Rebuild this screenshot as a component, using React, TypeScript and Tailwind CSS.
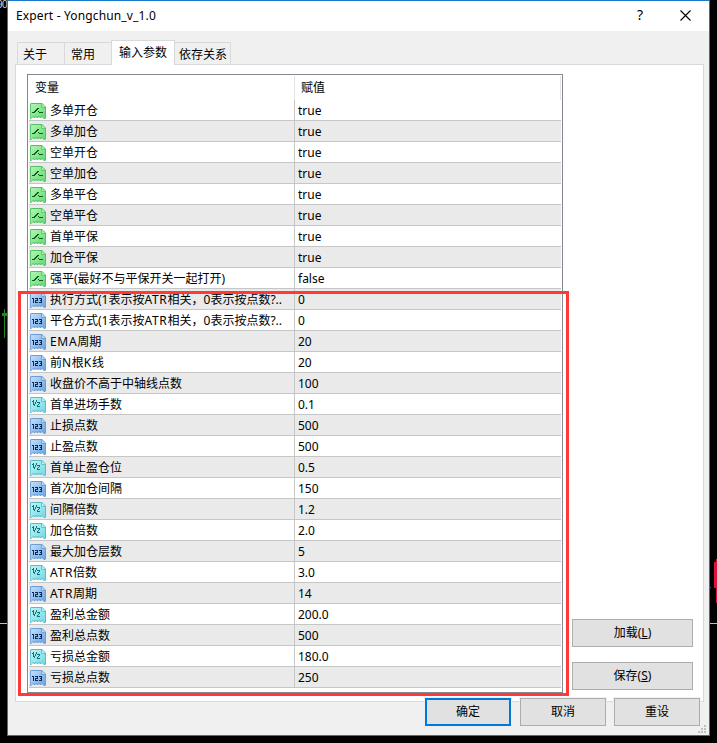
import React from "react";

type Kind = "bool" | "int" | "real";

const rows: [Kind, string, string][] = [
  ["bool", "多单开仓", "true"],
  ["bool", "多单加仓", "true"],
  ["bool", "空单开仓", "true"],
  ["bool", "空单加仓", "true"],
  ["bool", "多单平仓", "true"],
  ["bool", "空单平仓", "true"],
  ["bool", "首单平保", "true"],
  ["bool", "加仓平保", "true"],
  ["bool", "强平(最好不与平保开关一起打开)", "false"],
  ["int", "执行方式(1表示按ATR相关，0表示按点数?..", "0"],
  ["int", "平仓方式(1表示按ATR相关，0表示按点数?..", "0"],
  ["int", "EMA周期", "20"],
  ["int", "前N根K线", "20"],
  ["int", "收盘价不高于中轴线点数", "100"],
  ["real", "首单进场手数", "0.1"],
  ["int", "止损点数", "500"],
  ["int", "止盈点数", "500"],
  ["real", "首单止盈仓位", "0.5"],
  ["int", "首次加仓间隔", "150"],
  ["real", "间隔倍数", "1.2"],
  ["real", "加仓倍数", "2.0"],
  ["int", "最大加仓层数", "5"],
  ["real", "ATR倍数", "3.0"],
  ["int", "ATR周期", "14"],
  ["real", "盈利总金额", "200.0"],
  ["int", "盈利总点数", "500"],
  ["real", "亏损总金额", "180.0"],
  ["int", "亏损总点数", "250"],
];

const palette = {
  bool: { edge: "#52c063", light: "#a9f3ab", dark: "#6bdc7c", fold: "#4fbf60", ink: "#0a5c18" },
  int: { edge: "#6a9fd6", light: "#b9dafb", dark: "#73aae6", fold: "#5f95cc", ink: "#0c2a58" },
  real: { edge: "#5bbcc9", light: "#b5f3f5", dark: "#7bdbe6", fold: "#55b6c4", ink: "#14717e" },
};

// Pixel rectangles (x, y, width, height) for each icon's symbol
const symbols: Record<Kind, number[][]> = {
  bool: [[2, 9, 3, 1], [4, 8, 2, 1], [5, 7, 2, 1], [6, 6, 2, 1], [7, 5, 2, 1], [9, 9, 4, 1], [8, 8, 1, 1]],
  int: [
    [2, 6, 2, 1], [3, 7, 1, 4],
    [5, 6, 3, 1], [7, 7, 1, 1], [5, 8, 3, 1], [5, 9, 1, 1], [5, 10, 3, 1],
    [9, 6, 3, 1], [11, 7, 1, 1], [10, 8, 2, 1], [11, 9, 1, 1], [9, 10, 3, 1],
  ],
  real: [
    [2, 4, 1, 1], [3, 3, 1, 5],
    [6, 3, 1, 2], [5, 5, 1, 2], [4, 7, 1, 2],
    [7, 5, 3, 1], [9, 6, 1, 1], [8, 7, 1, 1], [7, 8, 1, 1], [7, 9, 3, 1],
  ],
};

function TypeIcon({ kind }: { kind: Kind }) {
  const p = palette[kind];
  return (
    <svg width="16" height="16" viewBox="0 0 16 16" className="ml-px mt-[3px] shrink-0">
      <defs>
        <linearGradient id={`fill-${kind}`} x1="0" y1="0" x2="1" y2="1">
          <stop offset="0.1" stopColor={p.light} />
          <stop offset="0.9" stopColor={p.dark} />
        </linearGradient>
      </defs>
      <path
        d="M0 1l1-1h11l4 4v11l-1 1h-1l-1-1-1-1-1 1h-1l-1-1-1 1h-1l-1-1-1 1h-1l-1-1-1 1-1 1h-1l-1-1z"
        fill={p.edge}
      />
      <path
        d="M1 1h10l4 4v9.500l-1 .5-2-2-1.500 1-1.500-1-1.500 1-1.500-1-1.500 1-1.500-1-1.500 2-1 0z"
        fill={`url(#fill-${kind})`}
      />
      <path d="M11 1h1l3 3v1h-4z" fill={p.light} />
      <path d="M11.500 1v3.500h3.500" fill="none" stroke={p.fold} strokeOpacity="0.8" />
      {symbols[kind].map(([x, y, w, h], i) => (
        <rect key={i} x={x} y={y} width={w} height={h} fill={p.ink} shapeRendering="crispEdges" />
      ))}
    </svg>
  );
}

// Latin capitals are set slightly wider than the surrounding Chinese text
function Label({ text }: { text: string }) {
  return (
    <span className="ml-1 leading-[22px]">
      {text.split(/([A-Z]+)/).map((part, i) =>
        i % 2 ? <span key={i} className="tracking-[0.7px]">{part}</span> : part
      )}
    </span>
  );
}

function Button({ children, className }: { children: React.ReactNode; className: string }) {
  return (
    <button className={`flex h-7 items-center justify-center bg-[#e1e1e1] pb-px text-[12px] leading-none ${className}`}>
      <span>{children}</span>
    </button>
  );
}

export default function App() {
  return (
    <div className="relative h-[743px] w-[717px] overflow-hidden bg-black font-['Noto_Sans','Noto_Sans_CJK_SC',sans-serif] text-[12px] leading-none text-black">
      <span className="absolute -left-[3px] top-0 font-['Liberation_Sans',sans-serif] text-[10px] leading-[10px] tracking-[-0.5px] text-[#d0d0d0]">90</span>
      <div className="absolute left-[4px] top-[309px] h-[29px] w-px bg-[#1f8a1f]" />
      <div className="absolute left-[2px] top-[313px] h-[3px] w-[5px] bg-[#1f8a1f]" />
      <div className="absolute left-0 top-[623px] h-px w-[717px] bg-[#c0c0c0]" />
      <div className="absolute left-[714px] top-[562px] h-[26px] w-[3px] bg-[#dc143c]" />
      <div className="absolute left-[716px] top-[559px] h-[44px] w-px bg-[#dc143c]" />
      <div className="absolute left-[710px] top-[587px] h-px w-px bg-[#1f8a1f]" />

      <div className="relative ml-[7px] h-[736px] w-[703px] border border-[#1979ca] bg-[#f0f0f0]">
        <header className="flex h-[30px] items-center bg-white pl-2">
          <span className="whitespace-nowrap text-[12px] tracking-[0.15px]">Expert - Yongchun_v_1.0</span>
          <span className="ml-auto mr-[37px] -translate-y-px text-[14px]">?</span>
          <svg width="11" height="11" viewBox="0 0 11 11" className="mr-[18px] -translate-y-px">
            <path d="M.5.5l10 10M10.500.5l-10 10" stroke="#000" strokeWidth="1.1" />
          </svg>
        </header>

        <nav className="mt-[9px] flex h-6 items-end pl-[9px]">
          <div className="h-[22px] w-[47px] border-l border-t border-[#d9d9d9] pl-[5px] pt-[6px]">关于</div>
          <div className="h-[22px] w-[47px] border-l border-t border-[#d9d9d9] pl-[6px] pt-[6px]">常用</div>
          <div className="relative z-10 -mb-px h-[25px] w-16 border-x border-t border-[#d9d9d9] bg-white pl-[7px] pt-[6px]">输入参数</div>
          <div className="h-[22px] w-14 whitespace-nowrap border-r border-t border-[#d9d9d9] pl-1 pt-[6px]">依存关系</div>
        </nav>

        <main className="ml-[7px] flex h-[638px] w-[689px] border border-[#d9d9d9] bg-white pl-[11px] pt-[9px]">
          <section className="h-[619px] w-[536px] border border-[#828790] pl-px pr-px">
            <div className="flex h-[25px] pt-px">
              <div className="w-[265px] pl-[6px] pt-[6px]">变量</div>
              <div className="flex-1 border-l border-r border-[#e3e3e3] pl-[6px] pt-[6px]">赋值</div>
            </div>
            {rows.map(([kind, name, value], i) => (
              <div
                key={name}
                className={`flex h-[21px] border-b border-[#c6c6c6] ${i % 2 ? "bg-[#eaeaea]" : "bg-white"}`}
              >
                <div className="flex w-[265px] whitespace-nowrap">
                  <TypeIcon kind={kind} />
                  <Label text={name} />
                </div>
                <div className="flex-1 border-l border-[#c6c6c6] pl-[3px] leading-[22px]">{value}</div>
              </div>
            ))}
          </section>
          <aside className="ml-[9px] flex h-[616px] w-[121px] flex-col justify-end gap-[15px]">
            <Button className="border border-[#adadad]">加载(<u>L</u>)</Button>
            <Button className="border border-[#adadad]">保存(<u>S</u>)</Button>
          </aside>
        </main>

        <footer className="relative -mt-1 flex pl-[417px]">
          <Button className="w-[86px] border-2 border-[#0078d7] ring-1 ring-[#f0f0f0]">确定</Button>
          <Button className="ml-[9px] w-[86px] border border-[#adadad] ring-1 ring-[#f0f0f0]">取消</Button>
          <Button className="ml-2 w-[86px] border border-[#adadad] ring-1 ring-[#f0f0f0]">重设</Button>
        </footer>

        <svg width="8" height="8" viewBox="0 0 8 8" className="absolute bottom-[2px] right-[3px]" fill="#bfbfbf">
          <path d="M6 0h2v2h-2zM3 3h2v2h-2zM6 3h2v2h-2zM0 6h2v2h-2zM3 6h2v2h-2zM6 6h2v2h-2z" />
        </svg>
      </div>

      <div className="absolute left-[18px] top-[291px] h-[405px] w-[551px] border-[3px] border-[#ff3838]" />
    </div>
  );
}
